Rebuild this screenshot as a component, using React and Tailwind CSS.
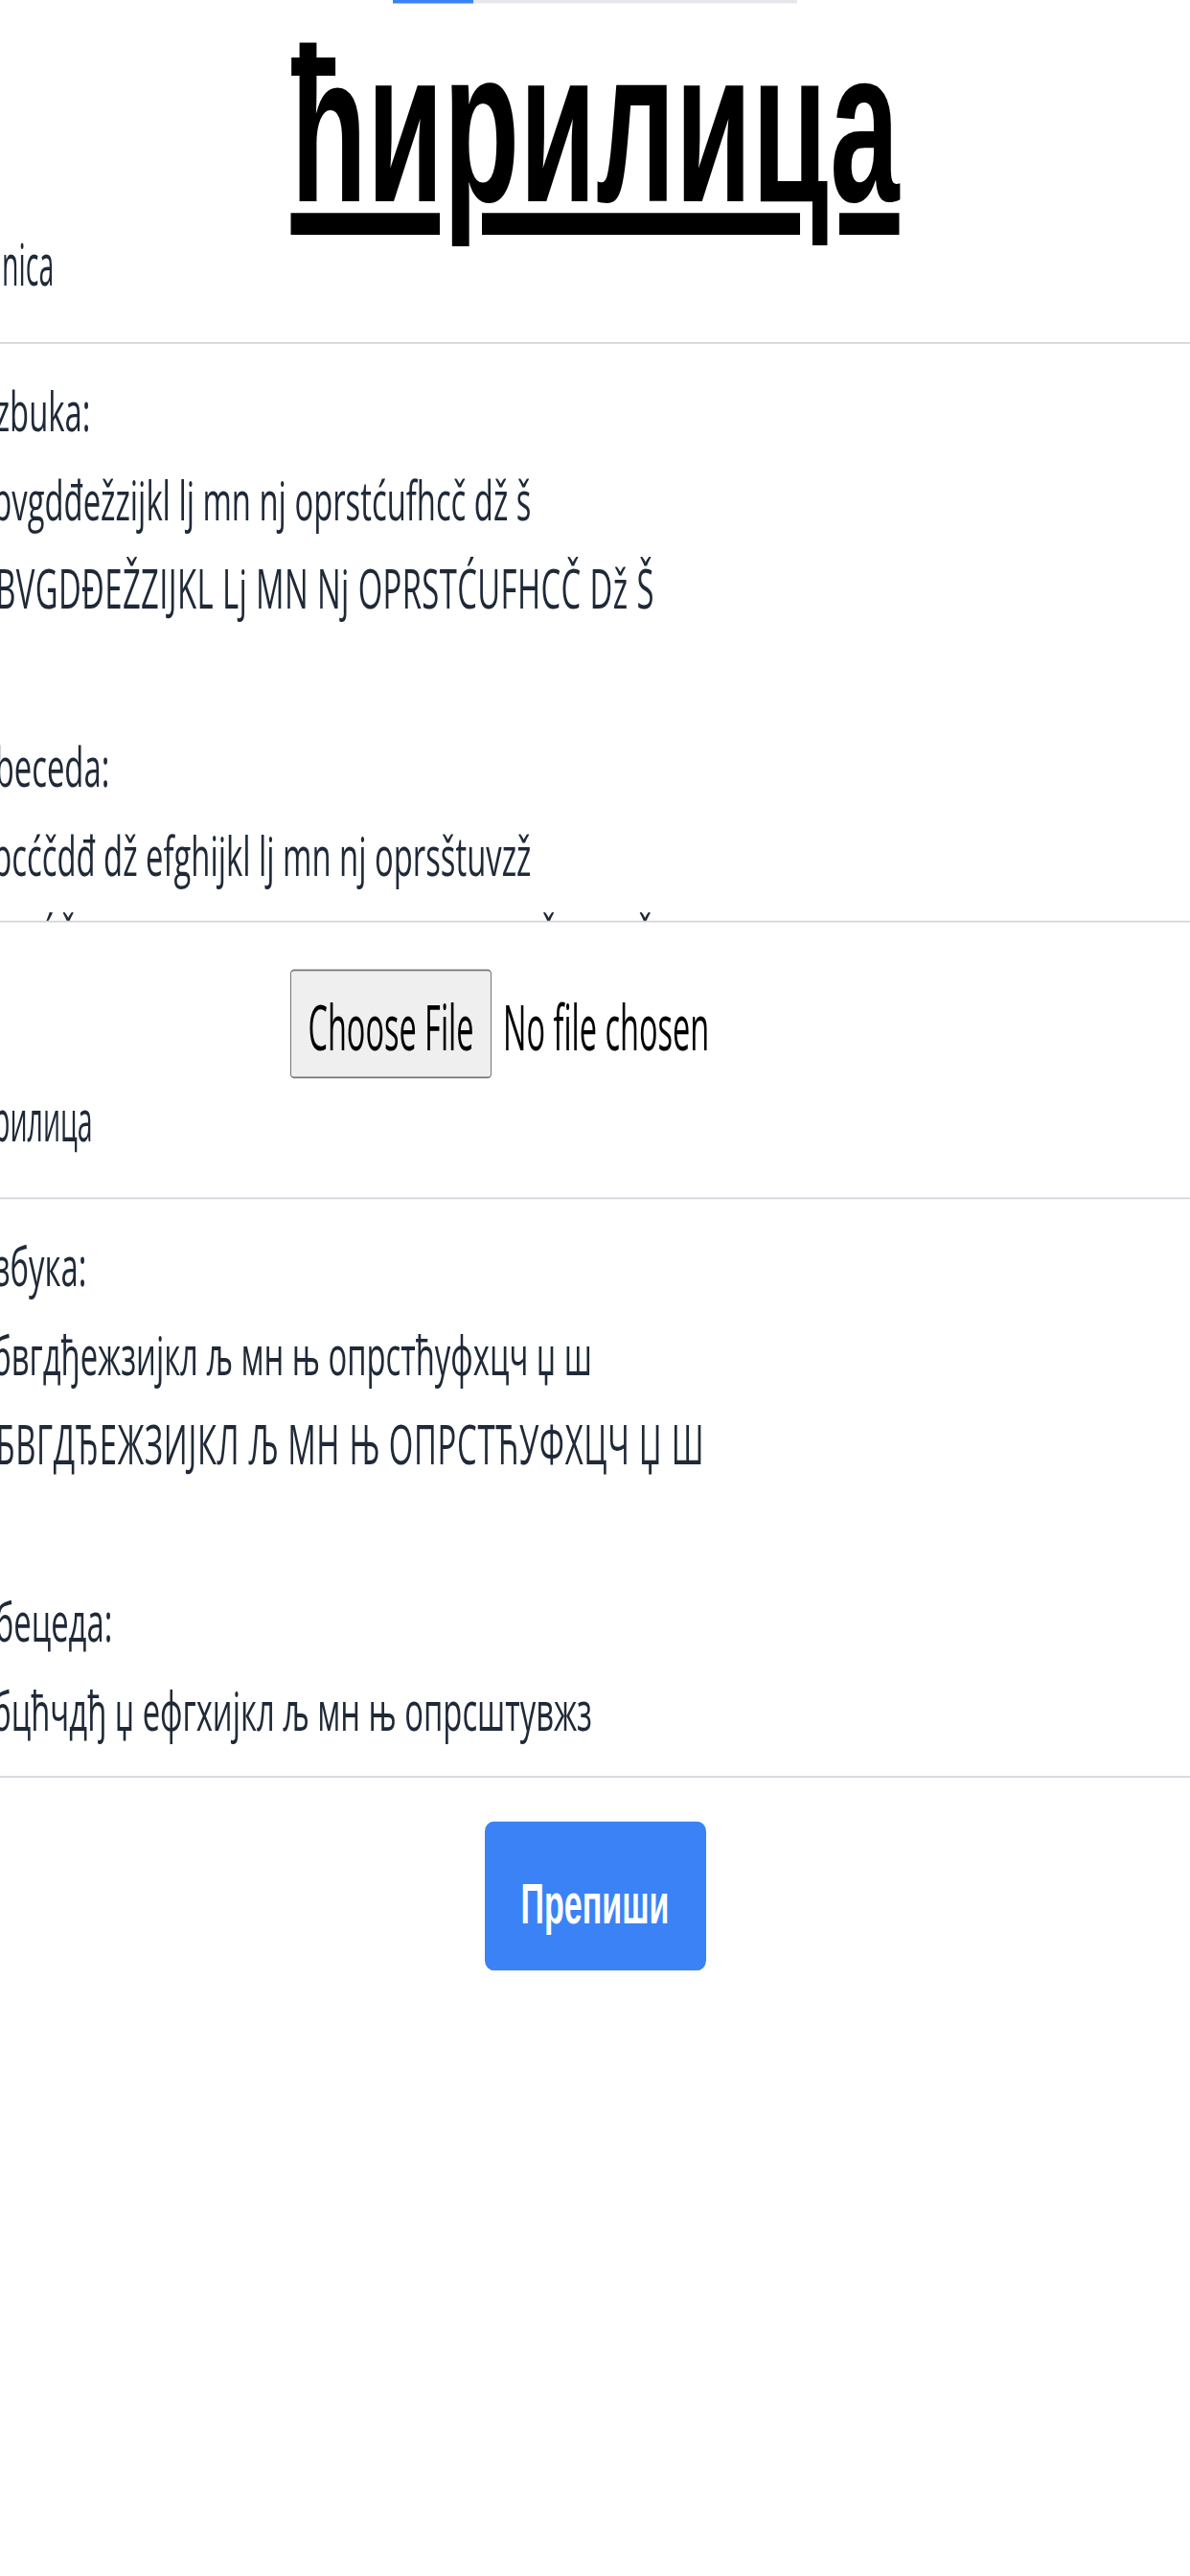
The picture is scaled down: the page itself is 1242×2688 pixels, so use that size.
import React from 'react';

const latin = [
  ['Azbuka:', ''],
  ['abvgdđežzijkl lj mn nj oprstćufhcč dž š', ''],
  ['ABVGDĐEŽZIJKL Lj MN Nj OPRSTĆUFHCČ Dž Š', 'tracking-[0.4px]'],
  ['', ''],
  ['Abeceda:', ''],
  ['abcćčdđ dž efghijkl lj mn nj oprsštuvzž', ''],
  ['ABCĆČDĐ Dž EFGHIJKL Lj MN Nj OPRSŠTUVZŽ', 'tracking-[0.4px]'],
];

const cyrillic = [
  ['Азбука:', ''],
  ['абвгдђежзијкл љ мн њ опрстћуфхцч џ ш', ''],
  ['АБВГДЂЕЖЗИЈКЛ Љ МН Њ ОПРСТЋУФХЦЧ Џ Ш', 'tracking-[0.7px]'],
  ['', ''],
  ['Абецеда:', ''],
  ['абцћчдђ џ ефгхијкл љ мн њ опрсштувжз', ''],
  ['АБЦЋЧДЂ Џ ЕФГХИЈКЛ Љ МН Њ ОПРСШТУВЖЗ', 'tracking-[0.7px]'],
];

function Alphabet({ lines }) {
  return (
    <div className="h-[345.5px] overflow-hidden border-y border-[#d1d5db] pt-[13px]">
      {lines.map(([text, extra], i) => (
        <div
          key={i}
          className={`ml-[-26px] h-[53px] whitespace-nowrap text-[32.8px] leading-[53px] text-[#1f2937] ${extra}`}
        >
          {text}
        </div>
      ))}
    </div>
  );
}

function Label({ children, className = '' }) {
  return (
    <div
      className={`ml-[-46px] mb-[17px] h-[53px] whitespace-nowrap text-[28.5px] leading-[53px] text-[#1f2937] ${className}`}
    >
      <span className="inline-block origin-[0_40px] scale-y-[1.22]">{children}</span>
    </div>
  );
}

export default function App() {
  return (
    <div className="min-h-screen overflow-hidden bg-white">
      <div className="origin-top scale-y-[1.75] font-['Open_Sans',sans-serif]">
        {/* progress */}
        <div className="flex justify-center">
          <div className="h-[2px] w-[422px] bg-[#e5e7eb]">
            <div className="h-full w-[84px] bg-[#3b82f6]" />
          </div>
        </div>

        <h1 className="mt-[14.5px] text-center font-['Liberation_Sans',sans-serif] text-[130px] font-bold leading-[117.6px] text-black underline">
          ћирилица
        </h1>

        <Label>Latinica</Label>
        <Alphabet lines={latin} />

        <div className="mx-auto mt-[28.6px] flex w-[636px] items-center gap-[12px]">
          <button
            type="button"
            className="flex h-[64.6px] w-[210px] items-center justify-center rounded-[4px/2.5px] border border-[#767676] bg-[#efefef] pt-[7px] text-black"
          >
            <span className="inline-block origin-[50%_35px] scale-y-[1.15] text-[32.5px]">Choose File</span>
          </button>
          <span className="inline-block origin-[0_42px] scale-y-[1.15] pt-[7px] text-[32.5px] text-black">
            No file chosen
          </span>
        </div>

        <Label className="mt-[1.7px]">Ћирилица</Label>
        <Alphabet lines={cyrillic} />

        <div className="mt-[26px] flex justify-center">
          <button
            type="button"
            className="flex h-[88.6px] w-[231px] items-center justify-center rounded-[10px/6px] bg-[#3b82f6] pt-[10px] font-['Liberation_Sans',sans-serif] text-[34px] font-bold text-white"
          >
            Препиши
          </button>
        </div>
      </div>
    </div>
  );
}
